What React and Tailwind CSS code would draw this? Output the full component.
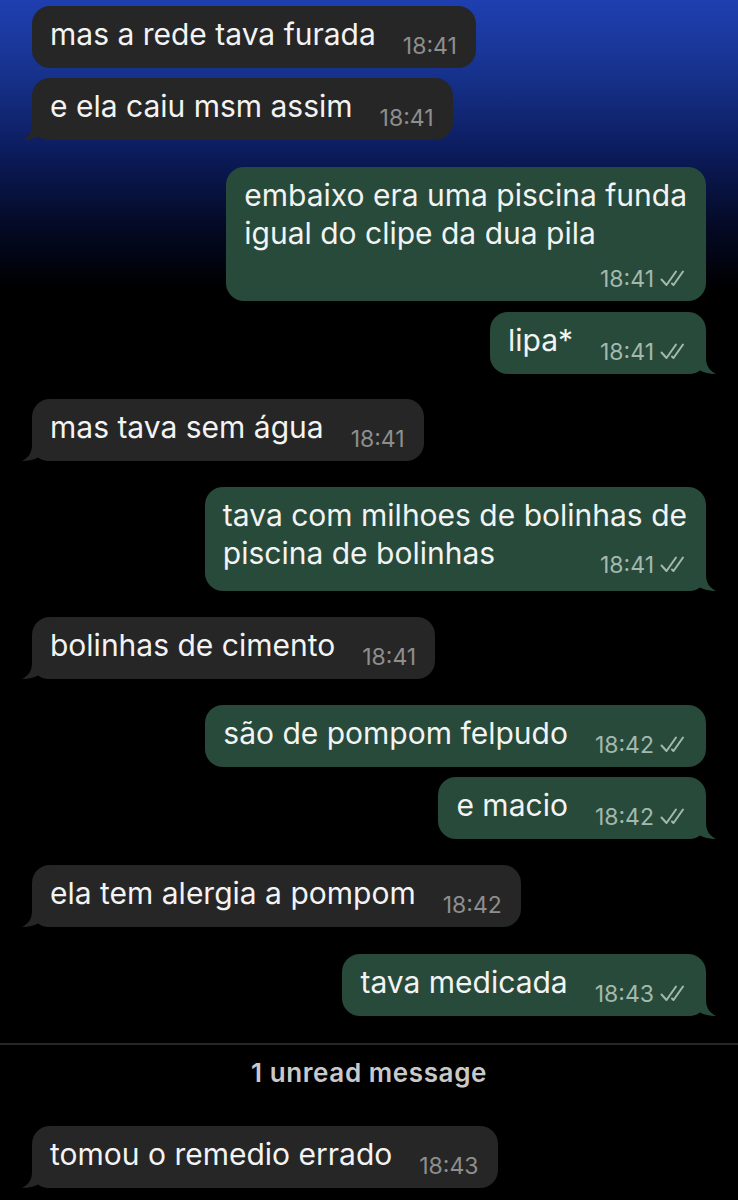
import React from "react";

const messages = [
  { from: "in", lines: ["mas a rede tava furada"], time: "18:41", tail: false, mt: "mt-[6px]" },
  { from: "in", lines: ["e ela caiu msm assim"], time: "18:41", tail: true, mt: "mt-[10px]" },
  {
    from: "out",
    lines: ["embaixo era uma piscina funda", "igual do clipe da dua pila"],
    time: "18:41",
    tail: false,
    timeBelow: true,
    mt: "mt-[27px]",
  },
  { from: "out", lines: ["lipa*"], time: "18:41", tail: true, mt: "mt-[11px]" },
  { from: "in", lines: ["mas tava sem água"], time: "18:41", tail: true, mt: "mt-[25px]" },
  {
    from: "out",
    lines: ["tava com milhoes de bolinhas de", "piscina de bolinhas"],
    time: "18:41",
    tail: true,
    tall: true,
    mt: "mt-[26px]",
  },
  { from: "in", lines: ["bolinhas de cimento"], time: "18:41", tail: true, mt: "mt-[26px]" },
  { from: "out", lines: ["são de pompom felpudo"], time: "18:42", tail: false, mt: "mt-[26px]" },
  { from: "out", lines: ["e macio"], time: "18:42", tail: true, mt: "mt-[10px]" },
  { from: "in", lines: ["ela tem alergia a pompom"], time: "18:42", tail: true, mt: "mt-[26px]" },
  { from: "out", lines: ["tava medicada"], time: "18:43", tail: true, mt: "mt-[27px]" },
];

function Ticks() {
  return (
    <svg width="27" height="17" viewBox="0 0 27 17" className="ml-[6px] mb-[4px] shrink-0">
      <path
        d="M1.5 9.5 L6.5 15 L16 1.5 M12 13.5 L13.5 15 L23 1.5"
        fill="none"
        stroke="#a3b9ad"
        strokeWidth="2"
        strokeLinecap="round"
        strokeLinejoin="round"
      />
    </svg>
  );
}

function Tail({ out }) {
  return (
    <svg
      width="30"
      height="24"
      viewBox="0 0 30 24"
      className={
        out
          ? "absolute right-[-10px] bottom-0 fill-[#284a3b]"
          : "absolute left-[-10px] bottom-0 -scale-x-100 fill-[#262626]"
      }
    >
      <path d="M0 0 H20 V8 C20 16 24 21 30 24 C23 24 18 22.5 14 20.5 C11 23 7 24 0 24 Z" />
    </svg>
  );
}

function Time({ out, time }) {
  return (
    <span className="flex items-end shrink-0 ml-[27px]">
      <span className={`text-[23px] leading-[24px] ${out ? "text-[#a3b9ad]" : "text-[#8e8e8e]"}`}>
        {time}
      </span>
      {out && <Ticks />}
    </span>
  );
}

function Bubble({ msg }) {
  const out = msg.from === "out";
  const last = msg.lines[msg.lines.length - 1];
  const earlier = msg.lines.slice(0, -1);
  const pb = msg.timeBelow ? "pb-[10px]" : msg.tall ? "pb-[14px]" : "pb-[10px]";
  return (
    <div className={`flex ${out ? "justify-end" : "justify-start"} ${msg.mt}`}>
      <div
        className={`relative rounded-[18px] pl-[18px] pr-[19px] pt-[9px] ${pb} ${
          out ? "bg-[#284a3b]" : "bg-[#262626]"
        }`}
      >
        {msg.tail && <Tail out={out} />}
        {msg.timeBelow ? (
          <>
            {msg.lines.map((l) => (
              <div key={l} className="text-[30px] leading-[38px] text-[#f3f3f3]">
                {l}
              </div>
            ))}
            <div className="flex justify-end mt-[15px]">
              <Time out={out} time={msg.time} />
            </div>
          </>
        ) : (
          <>
            {earlier.map((l) => (
              <div key={l} className="text-[30px] leading-[38px] text-[#f3f3f3]">
                {l}
              </div>
            ))}
            <div className="relative flex items-end justify-between">
              <span className="text-[30px] leading-[38px] text-[#f3f3f3] mb-[5px]">{last}</span>
              <Time out={out} time={msg.time} />
            </div>
          </>
        )}
      </div>
    </div>
  );
}

export default function App() {
  return (
    <div className="w-[738px] h-[1200px] overflow-hidden bg-black bg-[linear-gradient(180deg,#1f3fb0_0px,#17338f_70px,#0c1c5e_150px,#040a26_225px,#000_290px)] font-['Inter','Noto_Sans',sans-serif] px-[32px]">
      {messages.map((m, i) => (
        <Bubble key={i} msg={m} />
      ))}

      <div className="mt-[27px] -mx-[32px] h-[2px] bg-[#262626]" />
      <div className="text-center text-[26px] leading-[30px] tracking-[0.6px] font-semibold text-[#c9c9c9] mt-[13px]">
        1 unread message
      </div>

      <div className="mt-[38px]">
        <Bubble msg={{ from: "in", lines: ["tomou o remedio errado"], time: "18:43", tail: true, mt: "mt-0" }} />
      </div>
    </div>
  );
}
